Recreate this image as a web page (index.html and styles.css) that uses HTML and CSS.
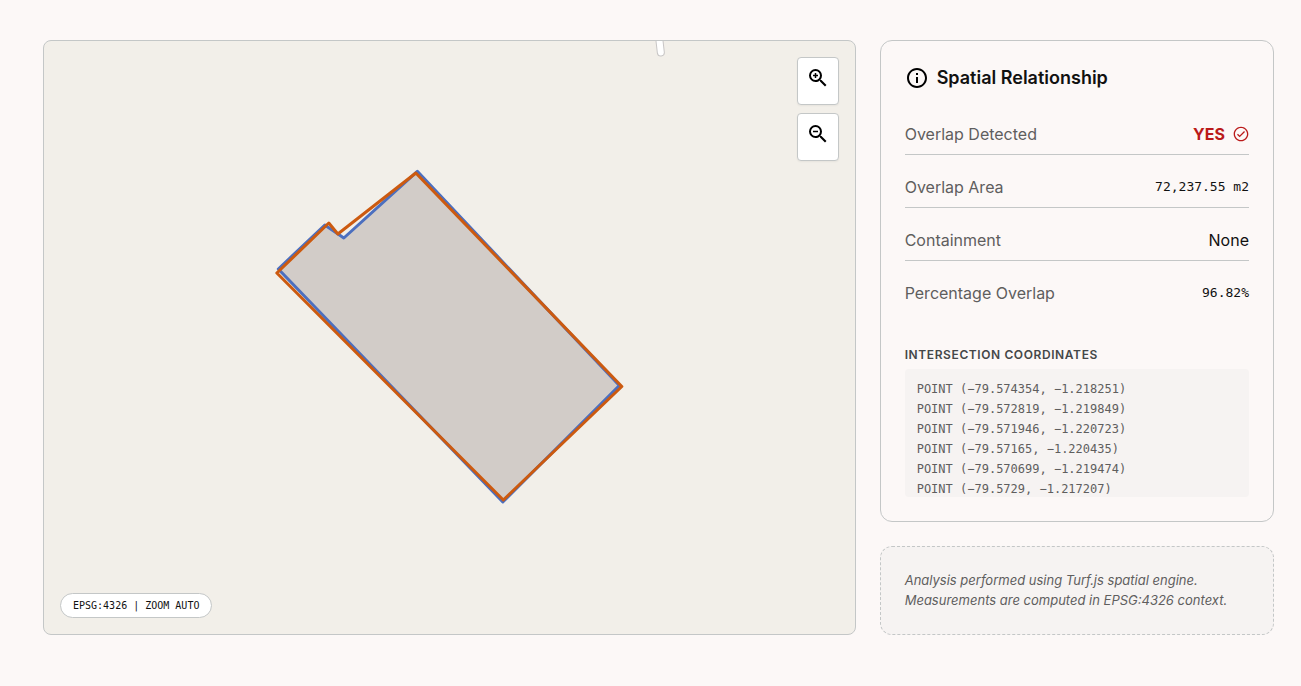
FILE: index.html
```
<!DOCTYPE html>
<html lang="en">
<head>
    <meta charset="UTF-8">
    <title>Spatial Relationship</title>
    <link rel="stylesheet" href="styles.css">
</head>
<body>
    <main class="layout">
        <section class="map" aria-label="Map">
            <svg class="map-canvas" viewBox="0 0 811 593" preserveAspectRatio="xMidYMid slice">
                <path class="road-casing" d="M615 -6 L617 11.500"/>
                <path class="road" d="M615 -6 L617 11.500"/>
                <polygon class="fill" points="373,131 577,345 459,460 234,230 282,184 294,194 300,197"/>
                <polygon class="shape-a" points="373.500,130.300 575.500,344.500 459,461 234.500,228 281,184 300,197"/>
                <polygon class="shape-b" points="372,132 578,345.500 459.500,459 233,232 285,182 294,193"/>
            </svg>
            <div class="zoom-controls">
                <button type="button" class="zoom-btn" aria-label="Zoom in">
                    <svg width="24" height="24" viewBox="0 0 24 24"><path d="M15.500 14h-.79l-.28-.27A6.471 6.471 0 0 0 16 9.500 6.500 6.500 0 1 0 9.500 16c1.610 0 3.090-.59 4.230-1.570l.27.28v.79l5 4.990L20.490 19l-4.990-5zm-6 0C7.010 14 5 11.990 5 9.500S7.010 5 9.500 5 14 7.010 14 9.500 11.990 14 9.500 14zM8.750 7h1.500v1.750H12v1.500h-1.750V12h-1.500v-1.750H7v-1.500h1.750z"/></svg>
                </button>
                <button type="button" class="zoom-btn" aria-label="Zoom out">
                    <svg width="24" height="24" viewBox="0 0 24 24"><path d="M15.500 14h-.79l-.28-.27A6.471 6.471 0 0 0 16 9.500 6.500 6.500 0 1 0 9.500 16c1.610 0 3.090-.59 4.230-1.570l.27.28v.79l5 4.990L20.490 19l-4.990-5zm-6 0C7.010 14 5 11.990 5 9.500S7.010 5 9.500 5 14 7.010 14 9.500 11.990 14 9.500 14zM7 8.750h5v1.500H7z"/></svg>
                </button>
            </div>
            <div class="map-status">EPSG:4326 | ZOOM AUTO</div>
        </section>

        <aside class="sidebar">
            <section class="card">
                <h2>
                    <svg width="24" height="24" viewBox="0 0 24 24"><path d="M11 7h2v2h-2zm0 4h2v6h-2zm1-9C6.480 2 2 6.480 2 12s4.480 10 10 10 10-4.480 10-10S17.520 2 12 2zm0 18c-4.410 0-8-3.590-8-8s3.590-8 8-8 8 3.590 8 8-3.590 8-8 8z"/></svg>
                    Spatial Relationship
                </h2>
                <dl class="results">
                    <div class="row">
                        <dt>Overlap Detected</dt>
                        <dd class="yes">YES
                            <svg width="16" height="16" viewBox="0 0 24 24"><path d="M12 1C5.920 1 1 5.920 1 12s4.920 11 11 11 11-4.920 11-11S18.080 1 12 1zm0 20c-4.970 0-9-4.030-9-9s4.030-9 9-9 9 4.030 9 9-4.030 9-9 9zm4.590-13.420L10 14.170l-2.590-2.580L6 13l4 4 8-8z"/></svg>
                        </dd>
                    </div>
                    <div class="row">
                        <dt>Overlap Area</dt>
                        <dd class="mono">72,237.55 m2</dd>
                    </div>
                    <div class="row">
                        <dt>Containment</dt>
                        <dd>None</dd>
                    </div>
                    <div class="row">
                        <dt>Percentage Overlap</dt>
                        <dd class="mono">96.82%</dd>
                    </div>
                </dl>
                <h3>Intersection Coordinates</h3>
                <div class="coords">
                    <div>POINT (−79.574354, −1.218251)</div>
                    <div>POINT (−79.572819, −1.219849)</div>
                    <div>POINT (−79.571946, −1.220723)</div>
                    <div>POINT (−79.57165, −1.220435)</div>
                    <div>POINT (−79.570699, −1.219474)</div>
                    <div>POINT (−79.5729, −1.217207)</div>
                </div>
            </section>
            <p class="note">Analysis performed using Turf.js spatial engine. Measurements are computed in EPSG:4326 context.</p>
        </aside>
    </main>
</body>
</html>
```
FILE: styles.css
```
* {
    box-sizing: border-box;
}

body {
    margin: 0;
    background-color: #fcf8f7;
    color: #111111;
    font-family: Inter, sans-serif;
    font-size: 16px;
    line-height: 24px;
}

h2, h3, dl, dd, p {
    margin: 0;
}

.layout {
    display: grid;
    grid-template-columns: repeat(12, 1fr);
    gap: 24px;
    padding: 40px 27px 40px 43px;
}

.map {
    grid-column: span 8;
    position: relative;
    overflow: hidden;
    background-color: #f2efe9;
    border: 1px solid #c4c7c7;
    border-radius: 8px;
}

.map-canvas {
    position: absolute;
    width: 100%;
    height: 100%;
}

.fill {
    fill: #d2ccc8;
}

.shape-a,
.shape-b {
    fill: none;
    stroke-width: 3;
    stroke-linejoin: round;
}

.shape-a {
    stroke: #4c6fbf;
}

.shape-b {
    stroke: #cc5a10;
}

.road-casing,
.road {
    stroke-linecap: round;
}

.road-casing {
    stroke: #c8c6c6;
    stroke-width: 8;
}

.road {
    stroke: #ffffff;
    stroke-width: 6;
}

.zoom-controls {
    position: absolute;
    top: 16px;
    right: 16px;
    display: flex;
    flex-direction: column;
    gap: 8px;
}

.zoom-btn {
    display: flex;
    align-items: flex-start;
    height: 48px;
    padding: 8px;
    background-color: #ffffff;
    border: 1px solid #c4c7c7;
    border-radius: 4px;
    box-shadow: 0 1px 2px rgba(0, 0, 0, 0.05);
    cursor: pointer;
}

.map-status {
    position: absolute;
    left: 16px;
    bottom: 16px;
    padding: 4px 12px;
    background-color: #ffffff;
    border: 1px solid #c4c7c7;
    border-radius: 16px;
    font-family: "DejaVu Sans Mono", monospace;
    font-size: 10px;
    line-height: 15px;
}

.sidebar {
    grid-column: span 4;
    display: flex;
    flex-direction: column;
    gap: 24px;
}

.card {
    padding: 24px;
    border: 1px solid #c4c7c7;
    border-radius: 12px;
}

h2 {
    display: flex;
    align-items: center;
    gap: 8px;
    margin-bottom: 32px;
    font-size: 18px;
    font-weight: 600;
    line-height: 25px;
}

.results {
    display: flex;
    flex-direction: column;
    gap: 20px;
}

.row {
    display: flex;
    justify-content: space-between;
    align-items: center;
    padding-bottom: 8px;
    border-bottom: 1px solid #c4c7c7;
}

.row:last-child {
    padding-bottom: 0;
    border-bottom: none;
}

dt {
    color: #5f5e5e;
}

.yes {
    display: flex;
    align-items: center;
    gap: 8px;
    color: #ba1a1a;
    font-weight: 700;
}

.yes svg {
    fill: currentColor;
}

.mono {
    font-family: "DejaVu Sans Mono", monospace;
    font-size: 13px;
}

h3 {
    margin: 41px 0 5px;
    color: #444748;
    font-size: 12px;
    font-weight: 600;
    line-height: 18px;
    letter-spacing: 0.05em;
    text-transform: uppercase;
}

.coords {
    height: 128px;
    padding: 10px 12px;
    overflow-y: auto;
    scrollbar-width: none;
    background-color: #f6f3f2;
    border-radius: 4px;
    color: #5f5e5e;
    font-family: "DejaVu Sans Mono", monospace;
    font-size: 12px;
    line-height: 20px;
}

.note {
    padding: 23px 24px 24px;
    background-color: #f6f3f2;
    border: 1px dashed #c4c7c7;
    border-radius: 12px;
    color: #5f5e5e;
    font-size: 13px;
    font-style: oblique;
    line-height: 20px;
}
```
